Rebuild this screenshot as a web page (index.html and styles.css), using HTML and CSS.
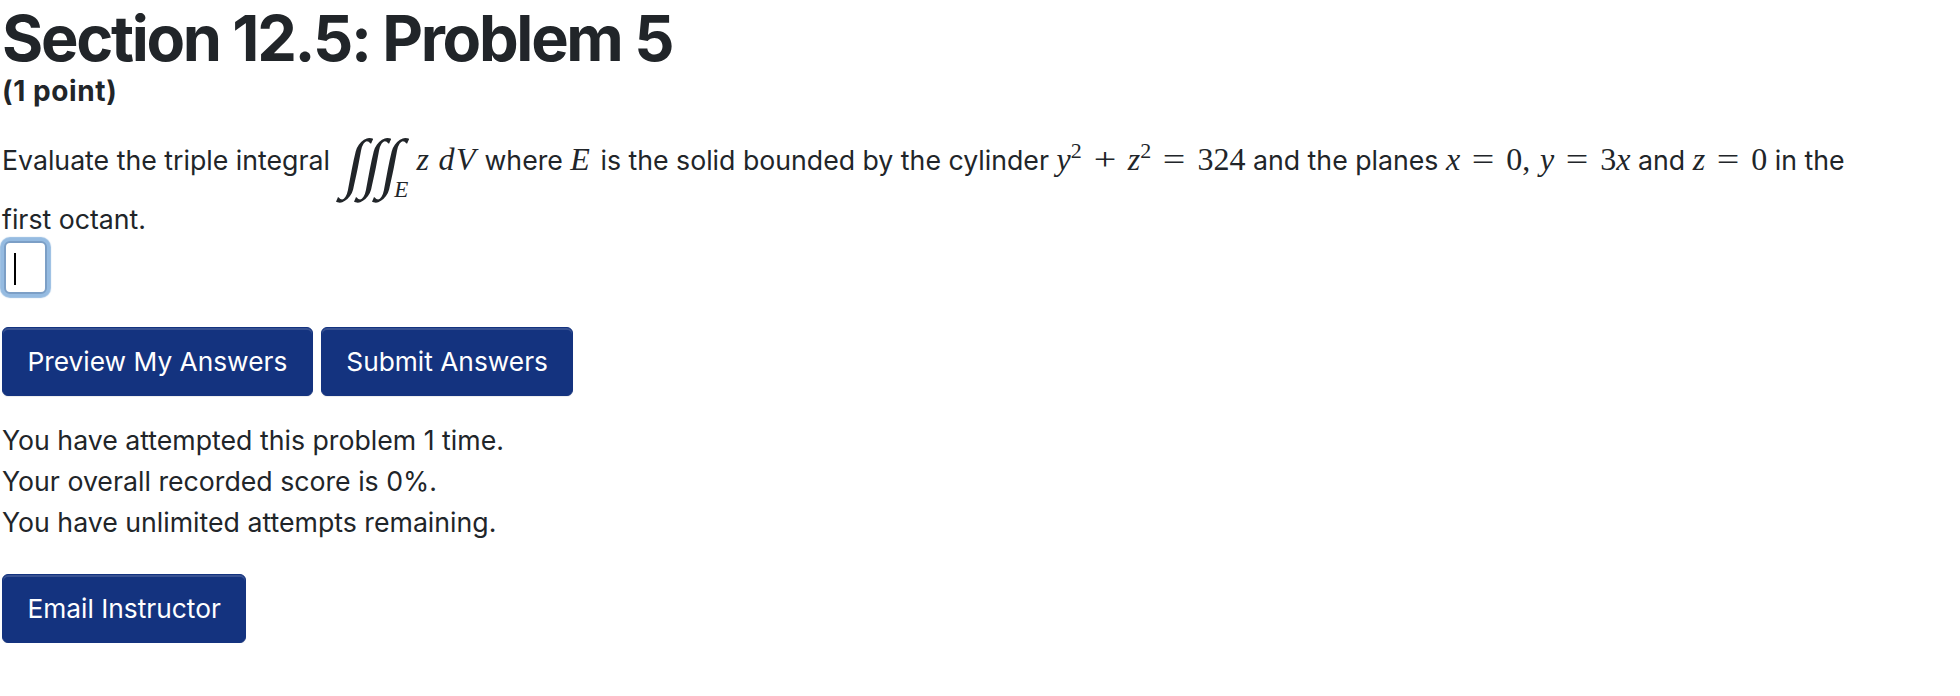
FILE: index.html
```html
<!DOCTYPE html>
<html lang="en">
<head>
<meta charset="utf-8">
<title>Section 12.5: Problem 5</title>
<link rel="stylesheet" href="styles.css">
</head>
<body>
<main class="page">
  <h1 class="title">Section 12.5: Problem 5</h1>
  <div class="points">(1 point)</div>
  <p class="prompt">Evaluate the triple integral <span class="int"><span class="int-signs"><span class="sign">∫</span><span class="sign">∫</span><span class="sign">∫</span></span><i class="int-sub">E</i></span><span class="m"><i>z</i><i class="thin dv">dV</i></span> where <i class="m set">E</i> is the solid bounded by the cylinder <span class="m"><i>y</i><sup>2</sup><span class="bin">+</span><i>z</i><sup>2</sup><span class="rel">=</span>324</span> and the planes <span class="m"><i>x</i><span class="rel">=</span>0,<i class="thin">y</i><span class="rel">=</span>3<i>x</i></span> and <span class="m"><i>z</i><span class="rel">=</span>0</span> in the first octant.</p>
  <div class="answer"><input class="answer-input" type="text" aria-label="Answer"><span class="caret"></span></div>
  <div class="actions">
    <button class="btn" type="button">Preview My Answers</button>
    <button class="btn" type="button">Submit Answers</button>
  </div>
  <div class="status">
    <div>You have attempted this problem 1 time.</div>
    <div>Your overall recorded score is 0%.</div>
    <div>You have unlimited attempts remaining.</div>
  </div>
  <button class="btn" type="button">Email Instructor</button>
</main>
</body>
</html>
```

FILE: styles.css
```css
* { box-sizing: border-box; }
html, body { margin: 0; background: #fff; }
body { font-family: Inter, "Liberation Sans", sans-serif; color: #212529; font-size: 26.7px; overflow: hidden; }
.page { padding: 0 0 0 2px; width: 1900px; }
.title { margin: 0; font-size: 63px; font-weight: 650; line-height: 76px; letter-spacing: -2.3px; }
.points { font-size: 28px; font-weight: 700; line-height: 30px; letter-spacing: .6px; }
.prompt { margin: 20px 0 0; line-height: 41px; }
.m { font-family: "Liberation Serif", serif; font-size: 32px; }
.m sup { font-size: 22px; line-height: 0; }
.thin { margin-left: .3em; }
.dv { letter-spacing: 1.5px; }
.set { padding-right: 3px; }
.bin, .rel { display: inline-block; margin: 0 .44em; transform: scaleX(1.25); line-height: 1; }
.int { display: inline-block; position: relative; width: 67px; height: 73px; margin: 0 8px 0 4px; vertical-align: -29px; }
.int-signs { position: absolute; left: 6px; top: 0; display: flex; font-family: "Liberation Serif", serif; font-size: 66px; line-height: 73px; }
.sign { width: 18px; display: block; transform: skewX(-11deg); }
.int-sub { position: absolute; right: 0; bottom: -2px; font-family: "Liberation Serif", serif; font-size: 23px; line-height: 1; }
.answer { position: relative; width: 43px; height: 53px; margin: 1px 0 0 2px; }
.answer-input { display: block; width: 43px; height: 53px; padding: 0; border: 2px solid #7c9fc6; border-radius: 6px; background: #fff; box-shadow: 0 0 1px 4px rgba(130,175,220,.85); outline: 0; }
.caret { position: absolute; left: 10px; top: 12px; width: 2px; height: 32px; background: #000; }
.actions { display: flex; gap: 8px; margin-top: 33px; }
.btn { display: block; height: 69px; padding: 0 24.5px; border: 1px solid #14337f; border-radius: 6px; background: #14337f; color: #fff; font: 400 26.3px Inter, "Liberation Sans", sans-serif; box-shadow: inset 0 2px 0 rgba(255,255,255,.15), 0 1px 1px rgba(0,0,0,.075); }
.status { margin: 24px 0 31px; line-height: 41px; }
```
